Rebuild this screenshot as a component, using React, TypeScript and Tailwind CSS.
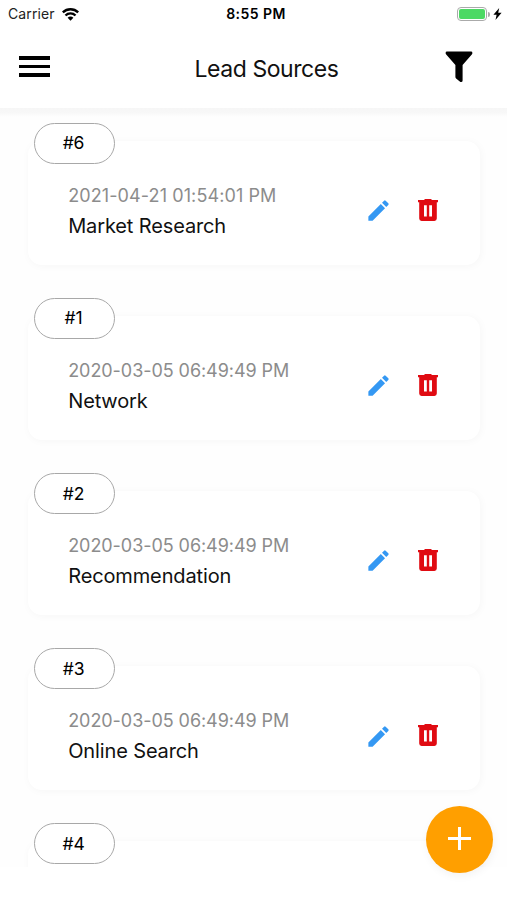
import React from "react";

type Lead = { id: number; date: string; name: string; dateClass?: string };

const leads: Lead[] = [
  { id: 6, date: "2021-04-21 01:54:01 PM", name: "Market Research", dateClass: "tracking-[0.1px]" },
  { id: 1, date: "2020-03-05 06:49:49 PM", name: "Network" },
  { id: 2, date: "2020-03-05 06:49:49 PM", name: "Recommendation" },
  { id: 3, date: "2020-03-05 06:49:49 PM", name: "Online Search" },
  { id: 4, date: "", name: "" },
];

function StatusBar() {
  return (
    <div className="grid h-7 grid-cols-3 items-center pl-2 pr-[5px]">
      <div className="flex items-center gap-[7px]">
        <span className="text-[14px] leading-7 tracking-[0.1px] text-[#222]">Carrier</span>
        <svg width="17" height="13" viewBox="0 0 17 13" fill="none" stroke="#000" strokeWidth="2.4">
          <path d="M.8 4.4C5.2 .2 11.8 .2 16.2 4.4" />
          <path d="M3.5 7.5c2.8-2.8 7.2-2.8 10 0" />
          <path d="M5.6 9.7c1.6-1.6 4.2-1.6 5.8 0L8.5 12.8z" fill="#000" stroke="none" />
        </svg>
      </div>
      <span className="whitespace-nowrap pl-[2px] text-center text-[14px] font-semibold leading-7 tracking-[0.45px] text-black">8:55 PM</span>
      <div className="flex items-center justify-end">
        <div className="-mt-px h-[14px] w-[30px] rounded-[4px] border border-[#aaa] p-px">
          <div className="h-full w-full rounded-[2px] bg-[#4cd964]" />
        </div>
        <div className="ml-px h-[5px] w-[2px] rounded-r-full bg-[#aaa]" />
        <svg className="-mt-px ml-[3px]" width="9" height="12" viewBox="0 0 9 12">
          <path d="M6.2 0 .4 6.8h3.2L2.5 12 8.6 4.8H5.2z" fill="#000" />
        </svg>
      </div>
    </div>
  );
}

function Header() {
  return (
    <div className="flex h-20 items-center pl-[19px] pr-[34px]">
      <div className="flex w-[31px] flex-col gap-[5px] pb-[3px]">
        <div className="h-[3.5px] bg-black" />
        <div className="h-[3.5px] bg-black" />
        <div className="h-[3.5px] bg-black" />
      </div>
      <h1 className="flex-1 whitespace-nowrap pl-[144.5px] pt-[2px] text-[23px] leading-8 tracking-[-0.44px] text-[#111]">Lead Sources</h1>
      <svg className="mb-[3px]" width="28" height="32" viewBox="0 0 28 32">
        <path d="M2 .5h24q1.4 0 1.4 1.4 0 .8-.6 1.5L17.6 14v15.5q0 1.5-1.5 1.5-.7 0-1.3-.5l-3.7-3q-.7-.6-.7-1.5V14L1.2 3.4Q.6 2.7.6 1.9.6.5 2 .5z" fill="#000" />
      </svg>
    </div>
  );
}

function LeadItem({ lead }: { lead: Lead }) {
  return (
    <div className="h-[175.1px]">
      <div className="relative z-10 -mb-[23px] ml-[6px] flex h-[41px] w-[81px] items-center justify-center rounded-full border border-[#a8a8a8] bg-white pr-[1px] pt-[1px] text-[17.5px] tracking-[-0.2px] text-black">
        #{lead.id}
      </div>
      <div className="flex h-[124.5px] items-center rounded-[14px] bg-white pl-[40.7px] pr-[41px] pt-[16px] shadow-[1px_1px_8px_rgba(0,0,0,0.035)]">
        {lead.name && (
          <>
            <div className="flex-1 whitespace-nowrap">
              <div className={`text-[18px] leading-[31px] text-[#8c8c8c] ${lead.dateClass ?? "tracking-[-0.06px]"}`}>{lead.date}</div>
              <div className="text-[20px] leading-[31px] tracking-[-0.13px] text-[#111]">{lead.name}</div>
            </div>
            <svg className="mr-[25px]" width="27" height="27" viewBox="0 0 24 24" fill="#3498f3">
              <path d="M3 17.25V21h3.75L17.81 9.94l-3.75-3.75zM20.71 7.04a1 1 0 0 0 0-1.41l-2.34-2.34a1 1 0 0 0-1.41 0l-1.83 1.83 3.75 3.75z" />
            </svg>
            <svg className="mb-[2px]" width="22" height="24" viewBox="0 0 22 24" fill="#e00b12">
              <path fillRule="evenodd" d="M7 1.9 8 .9h6l1 1h6v2.3H1V1.9zM2.2 4.2h17.6v16.4q0 2.4-2.4 2.4H4.6q-2.4 0-2.4-2.4zM7 7.2v11.3h2.8V7.2zm5.2 0v11.3H15V7.2z" />
            </svg>
          </>
        )}
      </div>
    </div>
  );
}

export default function App() {
  return (
    <div className="relative h-[900px] w-full max-w-[507px] overflow-hidden bg-white font-['Inter','Liberation_Sans',sans-serif]">
      <StatusBar />
      <Header />
      <main className="h-[759px] overflow-hidden bg-[linear-gradient(to_bottom,#f6f6f6_0,#f8f8f8_5px,#fefefe_9px)] px-[27.5px] pt-[14.5px]">
        {leads.map((lead) => (
          <LeadItem key={lead.id} lead={lead} />
        ))}
      </main>
      <button className="absolute left-[426px] top-[806px] flex h-[67px] w-[67px] items-center justify-center rounded-full bg-[#ff9f00] shadow-[1px_3px_9px_rgba(0,0,0,0.05)]" aria-label="Add">
        <svg className="mb-[3px]" width="23" height="23" viewBox="0 0 23 23" stroke="#fff" strokeWidth="3">
          <path d="M11.5 0v23M0 11.5h23" />
        </svg>
      </button>
    </div>
  );
}
